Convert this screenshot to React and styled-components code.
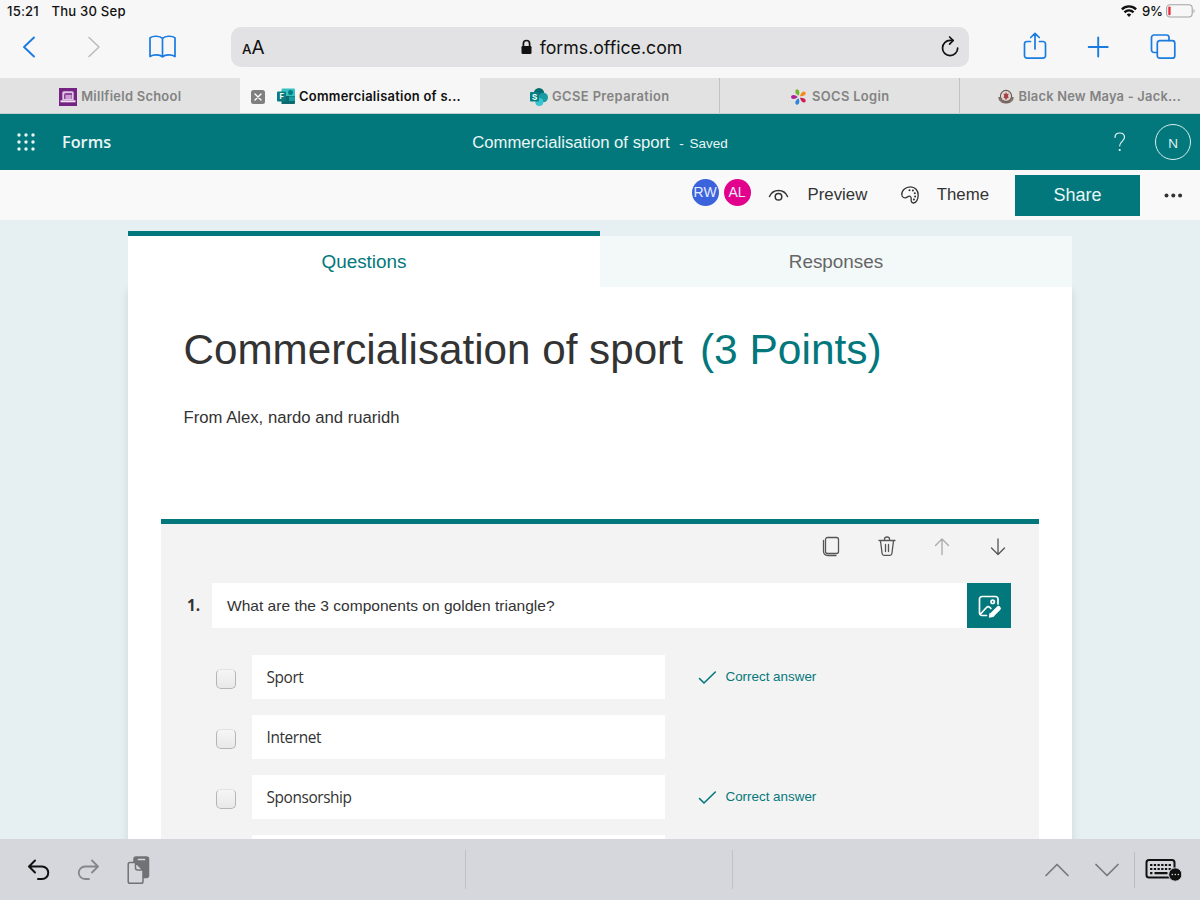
/* External dependencies */
import React from 'react';
import styled, { createGlobalStyle } from 'styled-components';

const teal = '#03787c';
const blue = '#1a7be0';
const systemFont = 'Inter, "Liberation Sans", sans-serif';
const formFont = '"Liberation Sans", Arial, sans-serif';
const segoeFont = '"Open Sans", "Noto Sans", sans-serif';

const GlobalStyle = createGlobalStyle`
    * {
        box-sizing: border-box;
    }

    body {
        margin: 0;
        overflow: hidden;
    }

    svg {
        display: block;
        flex: none;
        overflow: visible;
    }
`;

const Screen = styled.div`
    background: #f7f7f7;
    color: #333;
    display: flex;
    flex-direction: column;
    font-family: ${formFont};
    height: 900px;
    overflow: hidden;
    white-space: nowrap;
    width: 1200px;
`;

/* Status bar */

const StatusBar = styled.div`
    align-items: center;
    color: #111;
    display: flex;
    font-family: ${systemFont};
    font-size: 13.1px;
    font-weight: 500;
    height: 22px;
    letter-spacing: 0.2px;
    padding: 0 5px 0 7px;
`;

const StatusDate = styled.span`
    flex: 1;
    margin-left: 12.5px;
`;

const BatteryLevel = styled.span`
    letter-spacing: -0.1px;
    margin: 0 3px 0 5px;
`;

/* Browser toolbar */

const Toolbar = styled.div`
    align-items: center;
    display: flex;
    height: 40px;
    margin: 5px 0 11px;
    padding: 0 23px 0 15px;
`;

const NavButtons = styled.div`
    display: flex;
    gap: 38.5px;
    width: 216px;
`;

const AddressBar = styled.div`
    align-items: center;
    background: #e2e2e4;
    border-radius: 10px;
    color: #111;
    display: flex;
    font-family: ${systemFont};
    height: 40px;
    justify-content: space-between;
    padding: 0 9px 0 11px;
    width: 738px;
`;

const TextSize = styled.span`
    align-items: baseline;
    display: flex;
    font-size: 13.5px;
    font-weight: 500;
    width: 24px;

    b {
        font-size: 19px;
        font-weight: 400;
    }
`;

const Address = styled.span`
    align-items: center;
    display: flex;
    font-size: 17.7px;
    gap: 8px;
    margin-right: 3px;
`;

const PageButtons = styled.div`
    display: flex;
    flex: 1;
    justify-content: space-between;
    margin-left: 52px;
`;

/* Tab strip */

const TabStrip = styled.div`
    border-bottom: 1px solid #c5cfd0;
    display: flex;
    height: 36px;
`;

const BrowserTab = styled.div`
    align-items: center;
    background: ${props => (props.$active ? '#f7f7f7' : '#e2e2e2')};
    border-right: ${props => (props.$divider ? '1px solid #c2c2c2' : 'none')};
    color: ${props => (props.$active ? '#111' : '#838383')};
    display: flex;
    font-family: ${systemFont};
    font-size: 12.9px;
    font-weight: 600;
    gap: 4.5px;
    justify-content: center;
    letter-spacing: ${props => props.$spacing || '0.28px'};
    padding-left: ${props => (props.$shift ? '19px' : '0')};
    padding-right: ${props => (props.$active ? '8px' : '0')};
    padding-top: 2px;
    width: 240px;
`;

const CloseTab = styled.span`
    align-items: center;
    background: #7f7f7f;
    border-radius: 2.5px;
    display: flex;
    height: 14px;
    justify-content: center;
    margin-right: 7px;
    width: 14px;
`;

/* Forms header */

const Header = styled.header`
    align-items: center;
    background: ${teal};
    color: #e9f6f6;
    display: grid;
    flex: none;
    grid-template-columns: 1fr auto 1fr;
    height: 56px;
    padding: 0 9px 0 17px;
`;

const Brand = styled.div`
    align-items: center;
    display: flex;
    font-family: ${segoeFont};
    font-size: 16.3px;
    font-weight: 600;
    gap: 27px;
`;

const DocumentName = styled.div`
    align-items: baseline;
    display: flex;
    font-size: 16.7px;
    padding: 2px 8px 0 0;
`;

const SaveState = styled.span`
    font-size: 13.5px;
    margin-left: 9.5px;
    word-spacing: 2px;
`;

const Account = styled.div`
    align-items: center;
    display: flex;
    gap: 29px;
    justify-content: flex-end;
`;

const AccountInitial = styled.span`
    align-items: center;
    border: 1px solid #d8eeee;
    border-radius: 50%;
    display: flex;
    font-family: ${segoeFont};
    font-size: 13.5px;
    height: 36px;
    justify-content: center;
    padding-top: 1px;
    width: 36px;
`;

/* Command bar */

const CommandBar = styled.div`
    align-items: center;
    background: #f9f9f9;
    display: flex;
    flex: none;
    height: 50px;
    justify-content: flex-end;
    padding-right: 17px;
`;

const Avatar = styled.span`
    align-items: center;
    background: ${props => props.$color};
    border-radius: 50%;
    color: #e8ecff;
    display: flex;
    font-size: 14px;
    height: 27px;
    justify-content: center;
    margin: 0 5px 5px 0;
    padding-bottom: 2px;
    width: 27px;
`;

const Command = styled.span`
    align-items: center;
    display: flex;
    font-size: 16.8px;
    gap: ${props => props.$gap};
    margin-left: ${props => props.$offset};
`;

const ShareButton = styled.span`
    align-items: center;
    background: ${teal};
    color: #e9f6f6;
    display: flex;
    font-size: 18px;
    height: 41px;
    justify-content: center;
    margin: 0 24px 0 26px;
    width: 125px;
`;

/* Form editor */

const Canvas = styled.main`
    background: #e6eff2;
    flex: 1;
    min-height: 0;
    overflow: hidden;
    padding: 11px 128px 0;
`;

const FormTabs = styled.div`
    display: flex;
    height: 56px;
`;

const FormTab = styled.div`
    background: ${props => (props.$active ? '#fff' : '#f3f9f9')};
    border-top: 5px solid ${props => (props.$active ? teal : '#e6eff2')};
    color: ${props => (props.$active ? teal : '#666')};
    flex: 1;
    font-size: 18.9px;
    line-height: 51px;
    text-align: center;
`;

const FormSheet = styled.section`
    background: #fff;
    box-shadow: 0 4px 8px rgba(60, 90, 100, 0.14);
    height: 640px;
    padding: 35px 33px 0;
`;

const FormTitle = styled.h1`
    color: #333;
    font-size: 42.2px;
    font-weight: 400;
    line-height: 56px;
    margin: 0 0 0 22.5px;
`;

const Points = styled.span`
    color: ${teal};
    font-size: 42.5px;
    margin-left: 17px;
`;

const Description = styled.p`
    font-size: 16.7px;
    line-height: 20px;
    margin: 30px 0 0 22.5px;
`;

const QuestionCard = styled.div`
    background: #f3f3f3;
    border-top: 5px solid ${teal};
    height: 400px;
    margin-top: 91px;
    padding-right: 28px;
`;

const QuestionTools = styled.div`
    display: flex;
    gap: 31.5px;
    height: 59px;
    justify-content: flex-end;
    padding: 11px 1.5px 0 0;
`;

const QuestionRow = styled.div`
    align-items: center;
    display: flex;
    height: 45px;
`;

const QuestionNumber = styled.span`
    font-family: ${segoeFont};
    font-size: 15.3px;
    font-weight: 700;
    padding: 0 0 2px 26px;
    width: 51px;
`;

const QuestionInput = styled.div`
    background: #fff;
    flex: 1;
    font-size: 15.55px;
    height: 45px;
    line-height: 45px;
    padding-left: 15px;
`;

const MediaButton = styled.span`
    align-items: center;
    background: ${teal};
    display: flex;
    height: 45px;
    justify-content: center;
    width: 44px;
`;

const Options = styled.div`
    display: flex;
    flex-direction: column;
    gap: 16px;
    padding: 27px 0 0 54px;
`;

const OptionRow = styled.div`
    align-items: center;
    display: flex;
    height: 44px;
`;

const Checkbox = styled.span`
    background: linear-gradient(#f6f6f6, #e8e8e8);
    border: 1px solid #b5b5b5;
    border-radius: 5px;
    border-top-color: #e2e2e2;
    height: 20px;
    margin: 4px 16px 0 0.5px;
    width: 20.5px;
`;

const OptionInput = styled.div`
    background: #fff;
    font-family: ${segoeFont};
    font-size: 15.4px;
    height: 44px;
    letter-spacing: -0.4px;
    line-height: 46px;
    padding-left: 14.5px;
    width: 413px;
`;

const CorrectAnswer = styled.span`
    align-items: center;
    color: ${teal};
    display: flex;
    font-size: 13.4px;
    gap: 9.5px;
    margin: 0 0 1px 33px;
`;

/* Keyboard accessory bar */

const KeyboardBar = styled.footer`
    align-items: center;
    background: #d5d7dc;
    display: grid;
    flex: none;
    grid-template-columns: 465px 268px 1fr;
    height: 61px;
`;

const EditActions = styled.div`
    align-items: center;
    display: flex;
    gap: 25px;
    padding-left: 26px;
`;

const Suggestion = styled.div`
    border-left: 1px solid #bfc1c6;
    border-right: 1px solid #bfc1c6;
    height: 39px;
`;

const FieldActions = styled.div`
    align-items: center;
    display: flex;
    justify-content: flex-end;
    padding-right: 18px;
`;

const Divider = styled.span`
    background: #bbbdc2;
    height: 36px;
    margin: 0 10px 0 14px;
    width: 1.5px;
`;

/**
 * Line drawing with rounded strokes, used for every icon.
 */
const Icon = ({ width = 28, height = 28, color = '#333', stroke = 1.5, children }) => (
    <svg
        width={width}
        height={height}
        viewBox={`0 0 ${width} ${height}`}
        fill="none"
        stroke={color}
        strokeWidth={stroke}
        strokeLinecap="round"
        strokeLinejoin="round"
    >
        {children}
    </svg>
);

const WifiIcon = () => (
    <Icon width={16} height={12} color="#111" stroke={2.4}>
        <path d="M.9 4.3a10 10 0 0 1 14.2 0M3.5 7.3a6.3 6.3 0 0 1 9 0" strokeLinecap="butt" />
        <path d="M8 12 5.700 9.600a3.300 3.300 0 0 1 4.600 0Z" fill="#111" stroke="none" />
    </Icon>
);

const BatteryIcon = () => (
    <Icon width={29} height={14} color="#a4a4a4" stroke={1.1}>
        <rect x="0.6" y="0.8" width="25.6" height="12.2" rx="3.4" />
        <rect x="2.3" y="2.6" width="2.3" height="8.6" rx="1" fill="#e62838" stroke="none" />
        <path d="M27.5 5v4c1.5-.6 1.5-3.4 0-4Z" fill="#a4a4a4" stroke="none" />
    </Icon>
);

const BookIcon = () => (
    <Icon color={blue} stroke={1.7}>
        <path d="M14.5 5.5C12.1 2.8 5 2.4 2 4.900v18.600c3.500-2.200 9.800-2 12.500.3 2.700-2.300 9-2.500 12.500-.3V4.900C24 2.400 16.900 2.800 14.500 5.500v18" />
    </Icon>
);

const LockIcon = () => (
    <Icon width={11} height={16} color="#111" stroke={1.7}>
        <path d="M2.4 8V4.600a3.100 3.100 0 0 1 6.200 0V8" />
        <rect x="0.5" y="7" width="10" height="8" rx="1.3" fill="#111" stroke="none" />
    </Icon>
);

const ReloadIcon = () => (
    <Icon width={20} height={22} color="#111" stroke={1.7}>
        <path d="M17.700 12.100a7.600 7.600 0 1 1-7.600-7.700h2.900" />
        <path d="m9.600 1 3.600 3.500-3.600 3.700" />
    </Icon>
);

const ShareIcon = () => (
    <Icon color={blue} stroke={1.7}>
        <path d="M9.500 8.500H6A2.500 2.500 0 0 0 3.500 11v11.700a2.500 2.500 0 0 0 2.500 2.500h16a2.500 2.500 0 0 0 2.500-2.500V11A2.500 2.500 0 0 0 22 8.500h-3.500M14 16V.5M9.700 4.500 14 .300l4.300 4.200" />
    </Icon>
);

const TabsIcon = () => (
    <Icon color={blue} stroke={1.7}>
        <rect x="8.3" y="7.7" width="17.5" height="17.5" rx="2.5" />
        <path d="M8 19.500H5A2.500 2.500 0 0 1 2.500 17V4.500A2.500 2.500 0 0 1 5 2h12.500A2.500 2.500 0 0 1 20 4.500v3" />
    </Icon>
);

const MillfieldLogo = () => (
    <svg width="18" height="18" viewBox="0 0 18 18">
        <rect width="18" height="18" fill="#762484" />
        <path d="M3.300 12V4.800Q3.300 3.200 5 3.200h8q1.700 0 1.700 1.600V12Z" fill="#e3c6e7" />
        <path d="M5 11V6.800Q5 5 7 5h6v6Z" fill="#8d4699" />
        <path d="M6.500 7h6v4h-6Z" fill="#c89fd0" />
        <path d="M1.500 12.300h15v2h-15Z" fill="#f4e6f6" />
    </svg>
);

const FormsLogo = () => (
    <svg width="18" height="18" viewBox="0 0 18 18">
        <path d="M4.500 1.500q0-1 1-1H17q1 0 1 1V9H4.500Z" fill="#36c2c0" />
        <path d="M4.500 8H18v7q0 1-1 1H4.500Z" fill="#0b6b70" />
        <rect x="12" y="8.5" width="6" height="4.5" fill="#1b9da0" />
        <circle cx="13.5" cy="4.5" r="2.5" fill="#087f87" />
        <rect y="3.5" width="9" height="10" rx="1" fill="#0c7b80" />
        <text x="2.4" y="11.2" fontSize="7.5" fontWeight="700" fill="#fff">F</text>
    </svg>
);

const SharePointLogo = () => (
    <svg width="18" height="18" viewBox="0 0 18 18">
        <circle cx="9" cy="5.2" r="5.2" fill="#036c70" />
        <circle cx="13.2" cy="9.5" r="4.8" fill="#1a9ba1" />
        <circle cx="9.3" cy="14" r="4" fill="#37c6d0" />
        <rect y="4" width="9" height="9.5" rx="0.8" fill="#087f84" />
        <text x="2" y="11.5" fontSize="8" fontWeight="700" fill="#fff">S</text>
    </svg>
);

const petals = ['#72b62e', '#f58a1f', '#cf1d55', '#2b86d8', '#b01f9a'];

const SocsLogo = () => (
    <svg width="18" height="18" viewBox="-9 -9 18 18">
        {petals.map((color, index) => (
            <path
                key={color}
                d="M0-1.200Q-3.200-5-1.200-7.500 0-8.500 1.200-7.500 3.200-5 0-1.200Z"
                fill={color}
                transform={`rotate(${index * 72 - 18})`}
            />
        ))}
    </svg>
);

const CrestLogo = () => (
    <svg width="16" height="16" viewBox="0 0 16 16">
        <path d="M1 8c-.5 3.500 2.500 6 7 6s7.500-2.500 7-6" fill="#8f7770" stroke="#6b5a55" />
        <circle cx="8" cy="7" r="5.6" fill="#ded7d1" stroke="#6b5a55" strokeWidth="1.1" />
        <path d="m5.500 4.500 1.700.5L8 3l1 2 1.700-.5-.7 2.500.7 2-1.700.3L8 11.500 7 9.300l-1.500-.3.700-2Z" fill="#a8404a" />
    </svg>
);

const WaffleIcon = () => (
    <svg width="18" height="18" viewBox="0 0 18 18" fill="#e9f6f6">
        {[2, 9, 16].map(y => [2, 9, 16].map(x => <circle key={`${x}-${y}`} cx={x} cy={y} r="1.7" />))}
    </svg>
);

const PaletteIcon = () => (
    <Icon width={18} height={18} stroke={1.3}>
        <path d="M.8 9C.3 4.500 4.500.800 9.500.800c4.600 0 7.700 3.700 7.700 8.200 0 4.200-2 8-4.700 8-2.200 0-2.500-1.800-2.300-4 .200-2.200-1.200-3.300-2.600-2.600l-2.500 1.200C3.500 12.400 1.200 11.500.800 9Z" />
        <g fill="#333" stroke="none">
            <circle cx="8.5" cy="4.2" r="1" />
            <circle cx="11.9" cy="4.6" r="1" />
            <circle cx="13.8" cy="7.2" r="1" />
            <circle cx="14.1" cy="10.5" r="1" />
            <circle cx="12.9" cy="13.5" r="1" />
        </g>
    </Icon>
);

const EditImageIcon = () => (
    <Icon width={24} height={24} color="#fff" stroke={1.7}>
        <path d="M9.500 21.500H5A2.500 2.500 0 0 1 2.500 19V5A2.500 2.500 0 0 1 5 2.500h13.500A2.500 2.500 0 0 1 21 5v5M3.500 20l6-6.500q1.700-1.600 3.400 0l1 1" />
        <circle cx="15.7" cy="7.8" r="1.7" />
        <path d="m15 20.800 6.500-6.500" strokeWidth="4.7" />
        <path d="m11.800 23.800.8-5 4.500 4Z" fill="#fff" stroke="none" />
    </Icon>
);

const ClipboardIcon = () => (
    <Icon width={24} height={28} color="#717276" stroke={1.5}>
        <rect x="8" y="1" width="14.5" height="20.5" rx="2" fill="#717276" />
        <path d="M12.500 3.500h6" stroke="#d5d7dc" strokeWidth="1.7" />
        <path d="M4 6.500h5.500l7.500 7.500v11.500q0 1.800-1.800 1.800H4q-1.800 0-1.800-1.800V8.300Q2.200 6.500 4 6.500Z" fill="#d5d7dc" />
        <path d="M9.500 6.500V12q0 2 2 2H17Z" fill="#d5d7dc" />
    </Icon>
);

const KeyboardIcon = () => (
    <Icon width={37} height={24} color="#111" stroke={2}>
        <rect x="1.5" y="2" width="28" height="17.5" rx="2.5" />
        <path d="M5.100 7h21M5.100 11h21" strokeDasharray="2.3 1.4" strokeWidth="2.2" strokeLinecap="butt" />
        <path d="M5.100 15.200h2.300M9.500 15.200h13" strokeWidth="2.2" strokeLinecap="butt" />
        <circle cx="30.3" cy="16.5" r="6.7" fill="#111" stroke="#d5d7dc" strokeWidth="1" />
        <path d="M27.300 16.500h.01M30.300 16.500h.01M33.300 16.500h.01" stroke="#d5d7dc" strokeWidth="1.6" />
    </Icon>
);

const options = [
    { label: 'Sport', correct: true },
    { label: 'Internet', correct: false },
    { label: 'Sponsorship', correct: true },
    { label: '', correct: false },
];

/**
 * Browser status bar, toolbar and open tabs.
 */
const BrowserChrome = () => (
    <React.Fragment>
        <StatusBar>
            <span>15:21</span>
            <StatusDate>Thu 30 Sep</StatusDate>
            <WifiIcon />
            <BatteryLevel>9%</BatteryLevel>
            <BatteryIcon />
        </StatusBar>
        <Toolbar>
            <NavButtons>
                <Icon color={blue} stroke={1.9}><path d="M19 4.500 9 14l10 9.500" /></Icon>
                <Icon color="#bcbcbe" stroke={1.6}><path d="m7 4.500 10 9.500L7 23.500" /></Icon>
                <BookIcon />
            </NavButtons>
            <AddressBar>
                <TextSize>A<b>A</b></TextSize>
                <Address><LockIcon />forms.office.com</Address>
                <ReloadIcon />
            </AddressBar>
            <PageButtons>
                <ShareIcon />
                <Icon color={blue} stroke={1.9}><path d="M13.200 4.500v19M3.700 14h19" /></Icon>
                <TabsIcon />
            </PageButtons>
        </Toolbar>
        <TabStrip>
            <BrowserTab><MillfieldLogo />Millfield School</BrowserTab>
            <BrowserTab $active>
                <CloseTab>
                    <Icon width={8} height={8} color="#fff" stroke={1.4}><path d="m1 1 6 6M7 1 1 7" /></Icon>
                </CloseTab>
                <FormsLogo />
                Commercialisation of s...
            </BrowserTab>
            <BrowserTab $divider $spacing="0.4px"><SharePointLogo />GCSE Preparation</BrowserTab>
            <BrowserTab $divider $spacing="0.35px"><SocsLogo />SOCS Login</BrowserTab>
            <BrowserTab $shift $spacing="0.22px"><CrestLogo />Black New Maya - Jack...</BrowserTab>
        </TabStrip>
    </React.Fragment>
);

/**
 * Product header with the commands for the open form.
 */
const FormsHeader = () => (
    <React.Fragment>
        <Header>
            <Brand><WaffleIcon />Forms</Brand>
            <DocumentName>
                Commercialisation of sport
                <SaveState>- Saved</SaveState>
            </DocumentName>
            <Account>
                <Icon width={12} height={20} color="#e9f6f6" stroke={1.2}>
                    <path d="M1 5.500C1 2.800 3 1 5.700 1s4.800 1.700 4.800 4.300c0 4-4.800 4.200-4.800 8.500" />
                    <circle cx="5.7" cy="18" r="0.5" fill="#e9f6f6" />
                </Icon>
                <AccountInitial>N</AccountInitial>
            </Account>
        </Header>
        <CommandBar>
            <Avatar $color="#3b63dc">RW</Avatar>
            <Avatar $color="#e3008c">AL</Avatar>
            <Command $gap="18.5px" $offset="12.5px">
                <Icon width={21} height={14} stroke={1.5}>
                    <path d="M1.500 8.500C5 .5 16 .5 19.500 8.500" />
                    <circle cx="10.5" cy="8.8" r="3.3" />
                </Icon>
                Preview
            </Command>
            <Command $gap="18px" $offset="33.5px"><PaletteIcon />Theme</Command>
            <ShareButton>Share</ShareButton>
            <svg width="19" height="5" viewBox="0 0 19 5" fill="#333">
                <circle cx="2.5" cy="2.5" r="2" />
                <circle cx="9.3" cy="2.5" r="2" />
                <circle cx="16.1" cy="2.5" r="2" />
            </svg>
        </CommandBar>
    </React.Fragment>
);

const Question = () => (
    <QuestionCard>
        <QuestionTools>
            <Icon width={24} height={24} color="#555" stroke={1.3}>
                <rect x="6.5" y="2.5" width="13" height="16" rx="2" />
                <path d="M4.500 5.500V16q0 4.500 4.500 4.500h8" />
            </Icon>
            <Icon width={24} height={24} color="#555" stroke={1.3}>
                <path d="M4 5.500h16M9.500 5V4q0-2 2.500-2t2.500 2v1M5.500 6l1.600 12.500q.2 1.800 2 1.800h5.800q1.800 0 2-1.800L18.500 6M10.500 9.500v7M13.500 9.500v7" />
            </Icon>
            <Icon width={24} height={24} color="#a9a9a9" stroke={1.3}>
                <path d="M12 19.500V4M5.500 10.500 12 4l6.500 6.500" />
            </Icon>
            <Icon width={24} height={24} color="#555" stroke={1.3}>
                <path d="M12 4v15.500M5.500 13l6.500 6.500 6.500-6.500" />
            </Icon>
        </QuestionTools>
        <QuestionRow>
            <QuestionNumber>1.</QuestionNumber>
            <QuestionInput>What are the 3 components on golden triangle?</QuestionInput>
            <MediaButton><EditImageIcon /></MediaButton>
        </QuestionRow>
        <Options>
            {options.map(({ label, correct }) => (
                <OptionRow key={label}>
                    <Checkbox />
                    <OptionInput>{label}</OptionInput>
                    {correct && (
                        <CorrectAnswer>
                            <Icon width={18} height={14} color={teal} stroke={1.6}>
                                <path d="m1.500 8.500 4.500 4.500L17.300 2" />
                            </Icon>
                            Correct answer
                        </CorrectAnswer>
                    )}
                </OptionRow>
            ))}
        </Options>
    </QuestionCard>
);

export default function App() {
    return (
        <Screen>
            <GlobalStyle />
            <BrowserChrome />
            <FormsHeader />
            <Canvas>
                <FormTabs>
                    <FormTab $active>Questions</FormTab>
                    <FormTab>Responses</FormTab>
                </FormTabs>
                <FormSheet>
                    <FormTitle>
                        Commercialisation of sport
                        <Points>(3 Points)</Points>
                    </FormTitle>
                    <Description>From Alex, nardo and ruaridh</Description>
                    <Question />
                </FormSheet>
            </Canvas>
            <KeyboardBar>
                <EditActions>
                    <Icon width={25} height={24} color="#111" stroke={2}>
                        <path d="M9 2.500 3 8.500l6 6M3.500 8.500H16a6.200 6.200 0 0 1 0 12.500h-4" />
                    </Icon>
                    <Icon width={25} height={24} color="#85868a" stroke={1.8}>
                        <path d="m16 2.500 6 6-6 6M21.500 8.500H9A6.200 6.200 0 0 0 9 21h4" />
                    </Icon>
                    <ClipboardIcon />
                </EditActions>
                <Suggestion />
                <FieldActions>
                    <Icon width={26} height={20} color="#77787c" stroke={1.7}><path d="m2 15.500 11-11 11 11" /></Icon>
                    <Icon width={50} height={20} color="#77787c" stroke={1.7}><path d="m26 4.500 11 11 11-11" /></Icon>
                    <Divider />
                    <KeyboardIcon />
                </FieldActions>
            </KeyboardBar>
        </Screen>
    );
}
